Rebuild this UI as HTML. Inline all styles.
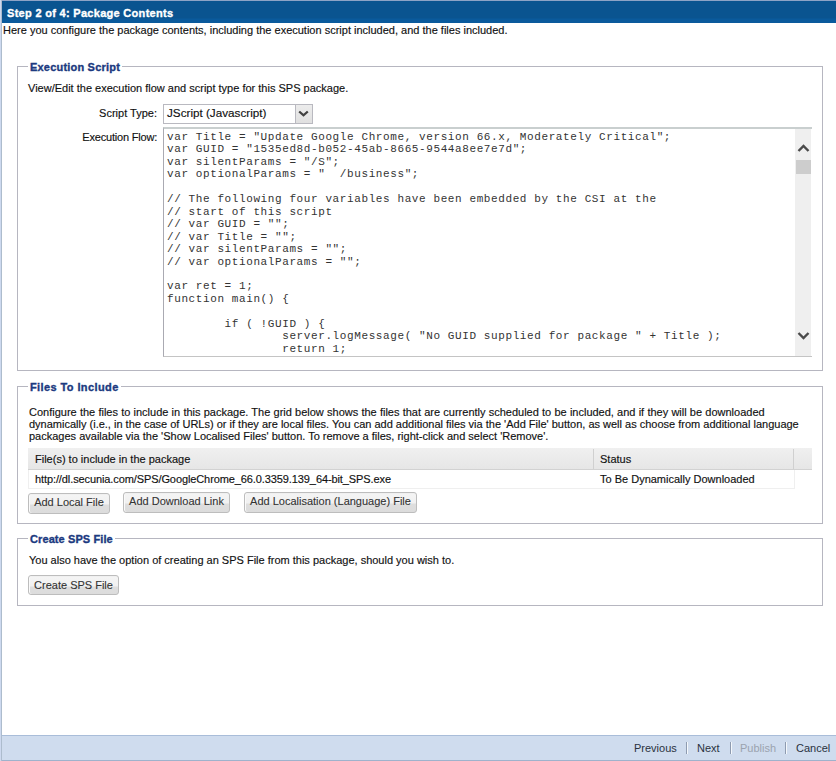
<!DOCTYPE html>
<html><head><meta charset="utf-8">
<style>
html,body{margin:0;padding:0;}
body{width:836px;height:761px;position:relative;overflow:hidden;background:#fff;font-family:"Liberation Sans",sans-serif;font-size:11px;color:#111;-webkit-text-stroke:0.15px #111;}
.a{position:absolute;white-space:pre;line-height:12px;}
#lb{position:absolute;left:0;top:0;width:1px;height:761px;background:#cdd9ef;border-right:1px solid #adbccd;}
#tl{position:absolute;left:0;top:0;width:836px;height:1px;background:#8da3c6;}
#hdr{position:absolute;left:2px;top:1px;width:834px;height:22px;background:linear-gradient(#0a5490 0px,#0a5490 17px,#0a5a9c 18px,#0a5a9c 22px);}
#hdr span{position:absolute;left:5px;top:6px;color:#fff;font-weight:bold;font-size:11px;letter-spacing:0.3px;-webkit-text-stroke:0.35px #fff;line-height:12px;white-space:pre;}
.fs{position:absolute;left:17px;width:804px;border:1px solid #b6b6c0;}
.lg{position:absolute;background:#fff;font-weight:bold;color:#1c3a80;-webkit-text-stroke:0.35px #1c3a80;padding:0 2px;line-height:12px;white-space:pre;letter-spacing:0.2px;}
.btn{position:absolute;box-sizing:border-box;height:21px;padding-top:2px;border:1px solid #bdbdbd;border-radius:3px;background:linear-gradient(#ececec 0px,#f4f4f4 1px,#f1f1f1 10px,#dedede 11px,#dcdcdc 100%);box-shadow:inset 1px 0 0 #fafafa;color:#333;-webkit-text-stroke:0.1px #333;line-height:12px;text-align:center;white-space:pre;}
.code{position:absolute;left:167px;top:131px;font-family:"Liberation Mono",monospace;font-size:11px;letter-spacing:0.6px;line-height:12.45px;white-space:pre;color:#333;-webkit-text-stroke:0;}
#ft{position:absolute;left:2px;top:735px;width:834px;height:26px;box-sizing:border-box;background:#cfdcee;border-top:1px solid #a9bdd9;border-bottom:1px solid #9fb2cc;}
.fl{position:absolute;top:742px;line-height:12px;color:#2a323e;white-space:pre;-webkit-text-stroke:0;}
.sep{position:absolute;top:742px;width:1px;height:12px;background:#8e9bb0;box-shadow:1px 0 0 #f4f8fc;}
</style></head><body>
<div id="tl"></div>
<div id="lb"></div>
<div id="hdr"><span>Step 2 of 4: Package Contents</span></div>
<div class="a" style="left:3px;top:24px;color:#111;">Here you configure the package contents, including the execution script included, and the files included.</div>

<!-- Fieldset 1 -->
<div class="fs" style="top:66px;height:303px;"></div>
<div class="lg" style="left:28px;top:61px;">Execution Script</div>
<div class="a" style="left:28px;top:82px;">View/Edit the execution flow and script type for this SPS package.</div>
<div class="a" style="left:99px;top:107px;width:58px;text-align:right;">Script Type:</div>
<div style="position:absolute;left:163px;top:104px;width:148px;height:18px;border:1px solid #b9b9c0;background:#fff;"></div>
<div style="position:absolute;left:295px;top:105px;width:16px;height:18px;border-left:1px solid #b9b9c0;background:linear-gradient(#ececec,#e0e0e0);"></div>
<svg style="position:absolute;left:298px;top:110px;" width="11" height="7" viewBox="0 0 11 7"><path d="M1.2 1.5 L5.5 5.3 L9.8 1.5" fill="none" stroke="#404040" stroke-width="2.3"/></svg>
<div class="a" style="left:167px;top:107px;font-size:11.7px;color:#111;">JScript (Javascript)</div>
<div class="a" style="left:80px;top:131px;width:77px;text-align:right;letter-spacing:-0.2px;">Execution Flow:</div>
<div style="position:absolute;left:163px;top:127px;width:648px;height:227px;border:1px solid #aaaab2;border-right:0;border-top:2px solid #c9cfcf;border-bottom-color:#c4c4c4;background:#fff;"></div>
<div style="position:absolute;left:795px;top:129px;width:16px;height:227px;background:#efefef;"></div>
<div style="position:absolute;left:796px;top:160px;width:15px;height:14px;background:#cdcdcd;"></div>
<svg style="position:absolute;left:797px;top:144px;" width="13" height="9" viewBox="0 0 13 9"><path d="M1.5 7 L6.5 2 L11.5 7" fill="none" stroke="#4a4a4a" stroke-width="2.4"/></svg>
<svg style="position:absolute;left:797px;top:331px;" width="13" height="9" viewBox="0 0 13 9"><path d="M1.5 2 L6.5 7 L11.5 2" fill="none" stroke="#4a4a4a" stroke-width="2.4"/></svg>
<div class="code">var Title = "Update Google Chrome, version 66.x, Moderately Critical";
var GUID = "1535ed8d-b052-45ab-8665-9544a8ee7e7d";
var silentParams = "/S";
var optionalParams = "  /business";

// The following four variables have been embedded by the CSI at the
// start of this script
// var GUID = "";
// var Title = "";
// var silentParams = "";
// var optionalParams = "";

var ret = 1;
function main() {

        if ( !GUID ) {
                server.logMessage( "No GUID supplied for package " + Title );
                return 1;</div>

<!-- Fieldset 2 -->
<div class="fs" style="top:386px;height:136px;"></div>
<div class="lg" style="left:28px;top:381px;letter-spacing:0.4px;">Files To Include</div>
<div class="a" style="left:29px;top:406px;"><span style="word-spacing:0.15px">Configure the files to include in this package. The grid below shows the files that are currently scheduled to be included, and if they will be downloaded</span>
dynamically (i.e., in the case of URLs) or if they are local files. You can add additional files via the 'Add File' button, as well as choose from additional language
packages available via the 'Show Localised Files' button. To remove a files, right-click and select 'Remove'.</div>
<div style="position:absolute;left:28px;top:448px;width:784px;height:21px;background:linear-gradient(#f0f0f0,#e6e6e6);border-bottom:1px solid #d2d2d2;"></div>
<div style="position:absolute;left:593px;top:449px;width:1px;height:20px;background:#d0d0d0;"></div>
<div style="position:absolute;left:793px;top:449px;width:1px;height:20px;background:#d0d0d0;"></div>
<div style="position:absolute;left:28px;top:470px;width:765px;height:18px;border:1px solid #efefef;border-top:0;"></div>
<div class="a" style="left:35px;top:453px;">File(s) to include in the package</div>
<div class="a" style="left:600px;top:453px;">Status</div>
<div class="a" style="left:35px;top:473px;letter-spacing:-0.1px;">http://dl.secunia.com/SPS/GoogleChrome_66.0.3359.139_64-bit_SPS.exe</div>
<div class="a" style="left:600px;top:473px;">To Be Dynamically Downloaded</div>
<div class="btn" style="left:28px;top:493px;width:82px;">Add Local File</div>
<div class="btn" style="left:123px;top:492px;width:107px;">Add Download Link</div>
<div class="btn" style="left:244px;top:492px;width:173px;">Add Localisation (Language) File</div>

<!-- Fieldset 3 -->
<div class="fs" style="top:538px;height:66px;"></div>
<div class="lg" style="left:28px;top:533px;letter-spacing:0.1px;">Create SPS File</div>
<div class="a" style="left:29px;top:554px;">You also have the option of creating an SPS File from this package, should you wish to.</div>
<div class="btn" style="left:28px;top:575px;width:91px;height:20px;padding-top:3px;">Create SPS File</div>

<!-- Footer -->
<div id="ft"></div>
<div class="fl" style="left:634px;">Previous</div>
<div class="sep" style="left:686px;"></div>
<div class="fl" style="left:697px;">Next</div>
<div class="sep" style="left:730px;"></div>
<div class="fl" style="left:740px;color:#9ba3ae;">Publish</div>
<div class="sep" style="left:785px;"></div>
<div class="fl" style="left:796px;">Cancel</div>
</body></html>
